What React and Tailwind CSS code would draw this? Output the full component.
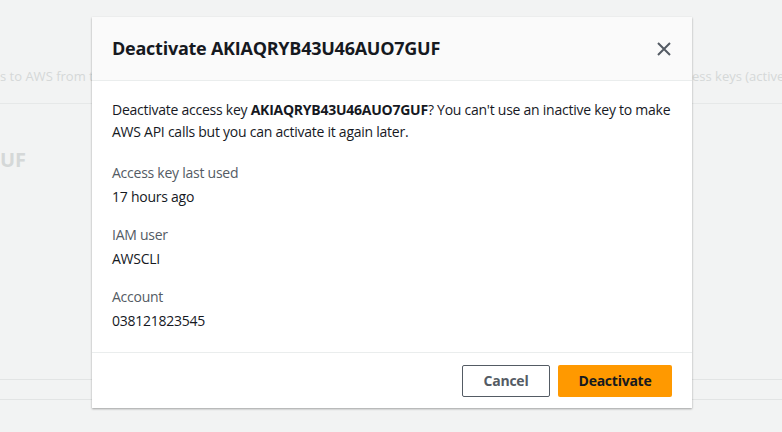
export default function App() {
  const f = { fontFamily: '"Open Sans", "Noto Sans", sans-serif' };
  return (
    <div className="relative w-[782px] h-[432px] overflow-hidden bg-[#f2f3f3]" style={f}>
      <div className="flex flex-col pt-[67px]">
        <div className="flex justify-between text-[13px] text-[#d5d8d8] whitespace-nowrap h-[36px]">
          <span>s to AWS from th</span>
          <span className="w-[90px] overflow-hidden">ess keys (active o</span>
        </div>
        <div className="border-t border-[#e6e8e8] h-[43px]" />
        <div className="text-[20px] font-bold text-[#d5d8d8] leading-[28px]">UF</div>
        <div className="h-[205px]" />
        <div className="border-t border-[#e2e4e4] h-[20px]" />
        <div className="border-t border-[#e2e4e4]" />
      </div>
      <div className="absolute left-[92px] top-[17px] w-[600px] bg-white shadow-[0_1px_2px_rgba(0,0,0,0.35)] text-[#16191f] tracking-[-0.25px]">
        <div className="h-[64px] bg-[#fafafa] border-b border-[#eaeded] flex items-center justify-between px-[20px]">
          <div className="text-[18px] font-bold">Deactivate AKIAQRYB43U46AUO7GUF</div>
          <svg width="16" height="16" viewBox="0 0 16 16"><path d="M2 2 L14 14 M14 2 L2 14" stroke="#545b64" strokeWidth="2" fill="none" /></svg>
        </div>
        <div className="px-[20px] pt-[18px] pb-[20px] text-[14px] leading-[22px] flex flex-col">
          <p>Deactivate access key <b>AKIAQRYB43U46AUO7GUF</b>? You can't use an inactive key to make AWS API calls but you can activate it again later.</p>
          <div className="mt-[19px] text-[#545b64]">Access key last used</div>
          <div className="mt-[2px]">17 hours ago</div>
          <div className="mt-[16px] text-[#545b64]">IAM user</div>
          <div className="mt-[2px]">AWSCLI</div>
          <div className="mt-[16px] text-[#545b64]">Account</div>
          <div className="mt-[2px]">038121823545</div>
        </div>
        <div className="border-t border-[#eaeded] h-[56px] flex items-center justify-end gap-[8px] pr-[20px]">
          <button className="h-[32px] w-[88px] border border-[#545b64] rounded-[2px] text-[14px] font-bold text-[#545b64]">Cancel</button>
          <button className="h-[32px] w-[114px] bg-[#ff9900] rounded-[2px] text-[14px] font-bold text-[#16191f]">Deactivate</button>
        </div>
      </div>
    </div>
  );
}
